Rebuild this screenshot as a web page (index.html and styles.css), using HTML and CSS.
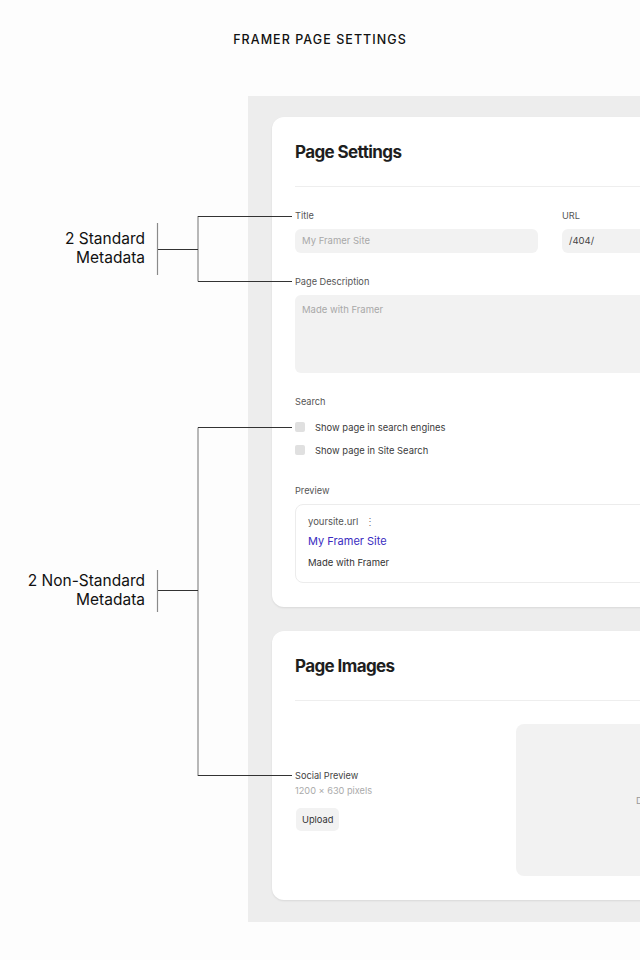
FILE: index.html
```html
<!DOCTYPE html>
<html lang="en">
<head>
<meta charset="utf-8">
<title>Framer Page Settings</title>
<link rel="stylesheet" href="styles.css">
</head>
<body>
<div class="page">
  <header class="top"><h1>FRAMER PAGE SETTINGS</h1></header>

  <div class="panel">
    <section class="card">
      <div class="card-head"><h2>Page Settings</h2></div>
      <div class="card-body">
        <div class="row2">
          <div class="field">
            <span class="label">Title</span>
            <div class="input placeholder">My Framer Site</div>
          </div>
          <div class="field">
            <span class="label">URL</span>
            <div class="input value">/404/</div>
          </div>
        </div>
        <div class="field gap">
          <span class="label">Page Description</span>
          <div class="textarea placeholder">Made with Framer</div>
        </div>
        <div class="field gap">
          <span class="label">Search</span>
          <div class="checks">
            <div class="check"><span class="box"></span>Show page in search engines</div>
            <div class="check"><span class="box"></span>Show page in Site Search</div>
          </div>
        </div>
        <div class="field gap-lg">
          <span class="label">Preview</span>
          <div class="preview">
            <div class="pv-url">yoursite.url <span class="dots">⋮</span></div>
            <div class="pv-title">My Framer Site</div>
            <div class="pv-desc">Made with Framer</div>
          </div>
        </div>
      </div>
    </section>

    <section class="card">
      <div class="card-head"><h2>Page Images</h2></div>
      <div class="card-body images">
        <div class="img-info">
          <span class="label dark">Social Preview</span>
          <span class="sub">1200 × 630 pixels</span>
          <button class="upload" type="button">Upload</button>
        </div>
        <div class="dropzone"><span class="drop-text">Drop image here</span></div>
      </div>
    </section>
  </div>

  <svg class="annot-lines" width="640" height="960" viewBox="0 0 640 960" aria-hidden="true">
    <g class="v">
      <line x1="157.5" y1="223" x2="157.5" y2="275"/>
      <line x1="198" y1="216" x2="198" y2="281.5"/>
      <line x1="157.5" y1="570" x2="157.5" y2="612"/>
      <line x1="198" y1="427.5" x2="198" y2="776"/>
    </g>
    <g class="h">
      <line x1="158" y1="249.5" x2="198" y2="249.5"/>
      <line x1="198" y1="216.5" x2="292" y2="216.5"/>
      <line x1="198" y1="281.5" x2="292" y2="281.5"/>
      <line x1="158" y1="590.5" x2="198" y2="590.5"/>
      <line x1="198" y1="427.5" x2="292" y2="427.5"/>
      <line x1="198" y1="775.5" x2="292" y2="775.5"/>
    </g>
  </svg>
  <div class="annot a1">2 Standard<br>Metadata</div>
  <div class="annot a2">2 Non-Standard<br>Metadata</div>
</div>
</body>
</html>
```

FILE: styles.css
```css
html, body {
  margin: 0;
  padding: 0;
  background: #fdfdfd;
}

.page {
  position: relative;
  width: 640px;
  height: 960px;
  overflow: hidden;
  font-family: Inter, "Noto Sans", sans-serif;
  color: #222;
}

.top {
  height: 96px;
  display: flex;
  justify-content: center;
}

.top h1 {
  margin: 0;
  padding-top: 33px;
  font-size: 12.5px;
  line-height: 14px;
  font-weight: 500;
  letter-spacing: 1.05px;
  color: #111;
}

.panel {
  margin-left: 248px;
  width: 620px;
  box-sizing: border-box;
  background: #ededed;
  padding: 21px 0 22px 24px;
  display: flex;
  flex-direction: column;
  gap: 24px;
}

.card {
  width: 556px;
  box-sizing: border-box;
  background: #fff;
  border-radius: 12px;
  box-shadow: 0 1px 2px rgba(0, 0, 0, 0.09);
  padding: 24px 23px;
}

.card-head {
  padding-bottom: 23px;
  border-bottom: 1px solid #eeeeee;
}

.card-head h2 {
  margin: 0;
  font-size: 17px;
  line-height: 22px;
  font-weight: 700;
  letter-spacing: -0.6px;
  color: #1e1e1e;
}

.card-body {
  padding-top: 23px;
}

.row2 {
  display: grid;
  grid-template-columns: 243px 243px;
  gap: 24px;
}

.field {
  display: flex;
  flex-direction: column;
}

.field.gap {
  margin-top: 23px;
}

.field.gap-lg {
  margin-top: 28px;
}

.label {
  display: block;
  font-size: 9.2px;
  line-height: 12px;
  color: #555;
  margin-bottom: 7px;
}

.label.dark {
  color: #444;
  margin-bottom: 3px;
}

.input {
  height: 24px;
  line-height: 24px;
  background: #f2f2f2;
  border-radius: 6px;
  padding: 0 7px;
  font-size: 9.5px;
}

.placeholder {
  color: #a8a8a8;
}

.value {
  color: #444;
}

.textarea {
  height: 78px;
  box-sizing: border-box;
  background: #f2f2f2;
  border-radius: 6px;
  padding: 9px 7px;
  font-size: 9.5px;
  line-height: 12px;
}

.checks {
  display: flex;
  flex-direction: column;
  gap: 9px;
  margin-top: 5px;
}

.check {
  display: flex;
  align-items: center;
  height: 14px;
  font-size: 9.4px;
  color: #3a3a3a;
}

.box {
  width: 10px;
  height: 10px;
  border-radius: 2px;
  background: #e0e0e0;
  margin-right: 10px;
}

.preview {
  height: 79px;
  box-sizing: border-box;
  border: 1px solid #ececec;
  border-radius: 8px;
  padding: 10px 12px 12px;
}

.pv-url {
  font-size: 9.5px;
  line-height: 14px;
  color: #555;
}

.dots {
  margin-left: 4px;
  color: #777;
}

.pv-title {
  margin-top: 4px;
  font-size: 11px;
  line-height: 16px;
  color: #3a2cbf;
}

.pv-desc {
  margin-top: 7px;
  font-size: 9.5px;
  line-height: 14px;
  color: #333;
}

.images {
  display: grid;
  grid-template-columns: 197px 1fr;
  gap: 24px;
}

.img-info {
  align-self: center;
  display: flex;
  flex-direction: column;
  align-items: flex-start;
}

.sub {
  font-size: 9.2px;
  line-height: 12px;
  color: #aaa;
}

.upload {
  margin-top: 11px;
  margin-left: 1px;
  height: 23px;
  padding: 0 6px;
  border: none;
  border-radius: 5px;
  background: #f2f2f2;
  font-family: inherit;
  font-size: 9.3px;
  color: #333;
}

.dropzone {
  height: 152px;
  box-sizing: border-box;
  background: #f2f2f2;
  border-radius: 8px;
  display: flex;
  align-items: center;
  padding-left: 120px;
  font-size: 9.5px;
  color: #999;
  white-space: nowrap;
}

.annot-lines {
  position: absolute;
  left: 0;
  top: 0;
  pointer-events: none;
}

.annot-lines .v line {
  stroke: #8a8a8a;
  stroke-width: 1.2;
}

.annot-lines .h line {
  stroke: #333;
  stroke-width: 1;
}

.annot {
  position: absolute;
  right: 495px;
  text-align: right;
  font-size: 15.5px;
  line-height: 19px;
  color: #111;
  white-space: nowrap;
}

.a1 {
  top: 229px;
}

.a2 {
  top: 571px;
}
```
